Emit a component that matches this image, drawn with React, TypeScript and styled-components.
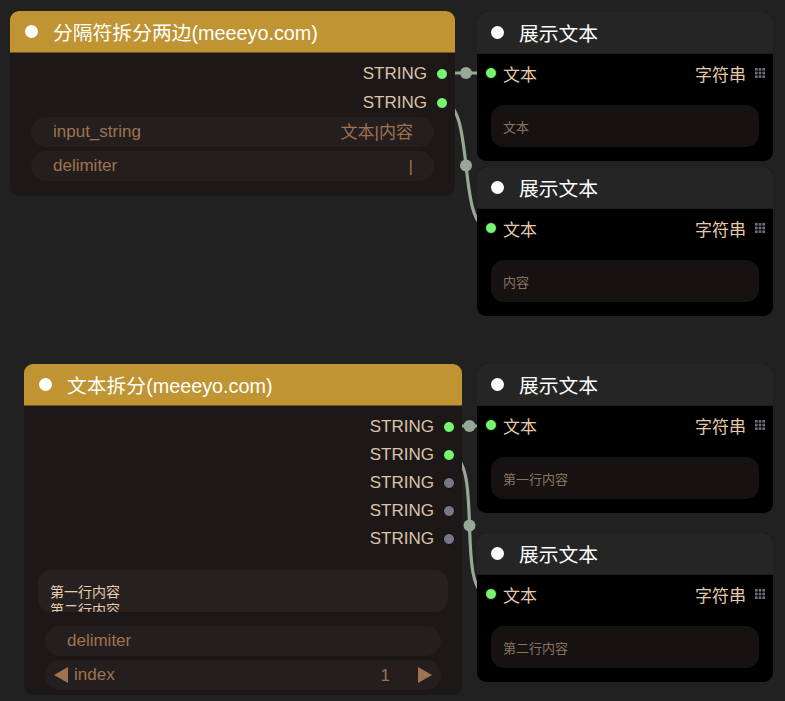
import React from "react";
import styled, { createGlobalStyle } from "styled-components";

const Global = createGlobalStyle`
  html, body { margin: 0; padding: 0; background: #212121; }
  body { font-family: "Liberation Sans", Arial, "Noto Sans CJK SC", sans-serif; }
`;

const Canvas = styled.div`
  position: relative;
  width: 785px;
  height: 701px;
  overflow: hidden;
  background: #212121;
`;

const LinkLayer = styled.svg`
  position: absolute;
  left: 0;
  top: 0;
  width: 785px;
  height: 701px;
`;

const Node = styled.div<{ $x: number; $y: number; $w: number; $bg: string }>`
  position: absolute;
  left: ${(p) => p.$x}px;
  top: ${(p) => p.$y}px;
  width: ${(p) => p.$w}px;
  background: ${(p) => p.$bg};
  border-radius: 9px;
  overflow: hidden;
  display: flex;
  flex-direction: column;
`;

const Header = styled.div<{ $bg: string; $pad: number; $line: string }>`
  height: 42px;
  flex: none;
  display: flex;
  align-items: center;
  gap: 15px;
  padding-left: ${(p) => p.$pad}px;
  background: ${(p) => p.$bg};
  border-bottom: 1px solid ${(p) => p.$line};
  box-sizing: border-box;
`;

const TitleDot = styled.span`
  width: 13px;
  height: 13px;
  border-radius: 50%;
  background: #ffffff;
  flex: none;
`;

const Title = styled.span`
  color: #ffffff;
  font-size: 19.8px;
  font-family: "Liberation Sans", Arial, "Noto Sans CJK SC", sans-serif;
  white-space: nowrap;
`;

const Body = styled.div<{ $pt: number; $pb: number }>`
  display: flex;
  flex-direction: column;
  padding-top: ${(p) => p.$pt}px;
  padding-bottom: ${(p) => p.$pb}px;
`;

const OutputRow = styled.div<{ $h: number }>`
  height: ${(p) => p.$h}px;
  display: flex;
  align-items: center;
  justify-content: flex-end;
  gap: 9px;
  padding-right: 7px;
`;

const SlotLabel = styled.span`
  color: #dcc3a9;
  font-size: 17px;
  white-space: nowrap;
`;

const SlotDot = styled.span<{ $on: boolean }>`
  width: 10px;
  height: 10px;
  border-radius: 50%;
  border: 1px solid #0c0c0c;
  background: ${(p) => (p.$on ? "#7af570" : "#777788")};
  flex: none;
`;

const Widget = styled.div<{ $mx: number; $mt: number }>`
  margin: ${(p) => p.$mt}px ${(p) => p.$mx}px 0;
  height: 30px;
  border-radius: 15px;
  background: #241f1e;
  display: flex;
  align-items: center;
  padding: 0 21px 0 22px;
  font-size: 17px;
  color: #a0724f;
  white-space: nowrap;
`;

const WidgetLabel = styled.span`
  flex: 1;
`;

const WidgetValue = styled.span`
  font-family: "Liberation Sans", Arial, "Noto Sans CJK SC", sans-serif;
  line-height: 1;
`;

const NumberWidget = styled(Widget)`
  padding: 0 9px 0 9px;
`;

const Arrow = styled.span<{ $dir: "l" | "r" }>`
  width: 0;
  height: 0;
  border-top: 8px solid transparent;
  border-bottom: 8px solid transparent;
  ${(p) =>
    p.$dir === "l"
      ? "border-right: 14px solid #a0724f; margin-right: 6px;"
      : "border-left: 14px solid #a0724f; margin-left: 28px;"}
  flex: none;
`;

const InputRow = styled.div`
  height: 28px;
  display: flex;
  align-items: center;
  padding: 0 8px;
  gap: 9px;
`;

const InputLabel = styled.span`
  flex: 1;
  margin-left: -3px;
  color: #e6c9ab;
  font-size: 17px;
  font-family: "Liberation Sans", Arial, "Noto Sans CJK SC", sans-serif;
`;

const TypeLabel = styled.span`
  color: #e6c9ab;
  font-size: 17px;
`;

const TextBox = styled.div<{ $bg: string; $mx: number; $mt: number; $pt: number; $lh: number; $fs: number; $color: string }>`
  margin: ${(p) => p.$mt}px ${(p) => p.$mx}px 0;
  height: 42px;
  box-sizing: border-box;
  border-radius: 13px;
  background: ${(p) => p.$bg};
  padding: ${(p) => p.$pt}px 12px 0;
  overflow: hidden;
  font-size: ${(p) => p.$fs}px;
  line-height: ${(p) => p.$lh}px;
  color: ${(p) => p.$color};
  font-family: "Noto Sans CJK SC", "Liberation Sans", sans-serif;
`;

const GridIcon = () => (
  <svg width="10" height="10" viewBox="0 0 10 10">
    {[0, 3.7, 7.4].map((y) =>
      [0, 3.7, 7.4].map((x) => (
        <rect key={`${x}-${y}`} x={x} y={y} width="2.6" height="2.6" fill="#6f6f82" />
      ))
    )}
  </svg>
);

type Link = { x1: number; y1: number; x2: number; y2: number };

const links: Link[] = [
  { x1: 442, y1: 73, x2: 490, y2: 73 },
  { x1: 442, y1: 102, x2: 490, y2: 229 },
  { x1: 449, y1: 426, x2: 490, y2: 426 },
  { x1: 449, y1: 455, x2: 490, y2: 596 },
];

const Links = () => (
  <LinkLayer viewBox="0 0 785 701">
    {links.map((l, i) => {
      const d = Math.hypot(l.x2 - l.x1, l.y2 - l.y1) * 0.25;
      const c1x = l.x1 + d;
      const c2x = l.x2 - d;
      const mx = 0.125 * l.x1 + 0.375 * c1x + 0.375 * c2x + 0.125 * l.x2;
      const my = 0.5 * l.y1 + 0.5 * l.y2;
      return (
        <g key={i}>
          <path
            d={`M ${l.x1} ${l.y1} C ${c1x} ${l.y1} ${c2x} ${l.y2} ${l.x2} ${l.y2}`}
            stroke="#98a896"
            strokeWidth="3.2"
            fill="none"
          />
          <circle cx={mx} cy={my} r="6" fill="#98a896" />
        </g>
      );
    })}
  </LinkLayer>
);

const ShowText = ({ x, y, text }: { x: number; y: number; text: string }) => (
  <Node $x={x} $y={y} $w={296} $bg="#000000">
    <Header $bg="#252525" $pad={14} $line="#1e1e1e">
      <TitleDot />
      <Title>展示文本</Title>
    </Header>
    <Body $pt={5} $pb={14}>
      <InputRow>
        <SlotDot $on />
        <InputLabel>文本</InputLabel>
        <TypeLabel>字符串</TypeLabel>
        <GridIcon />
      </InputRow>
      <TextBox $bg="#161211" $mx={14} $mt={18} $pt={13} $lh={18} $fs={13} $color="#8a7460">
        {text}
      </TextBox>
    </Body>
  </Node>
);

export default function App() {
  return (
    <>
      <Global />
      <Canvas>
        <Links />

        <Node $x={10} $y={11} $w={445} $bg="#1d1818">
          <Header $bg="#c09432" $pad={15} $line="#6e5420">
            <TitleDot />
            <Title>分隔符拆分两边(meeeyo.com)</Title>
          </Header>
          <Body $pt={6} $pb={15}>
            <OutputRow $h={29}>
              <SlotLabel>STRING</SlotLabel>
              <SlotDot $on />
            </OutputRow>
            <OutputRow $h={29}>
              <SlotLabel>STRING</SlotLabel>
              <SlotDot $on />
            </OutputRow>
            <Widget $mx={21} $mt={0}>
              <WidgetLabel>input_string</WidgetLabel>
              <WidgetValue>文本|内容</WidgetValue>
            </Widget>
            <Widget $mx={21} $mt={4}>
              <WidgetLabel>delimiter</WidgetLabel>
              <WidgetValue>|</WidgetValue>
            </Widget>
          </Body>
        </Node>

        <ShowText x={477} y={12} text="文本" />
        <ShowText x={477} y={167} text="内容" />

        <Node $x={24} $y={364} $w={438} $bg="#1d1818">
          <Header $bg="#c09432" $pad={15} $line="#6e5420">
            <TitleDot />
            <Title>文本拆分(meeeyo.com)</Title>
          </Header>
          <Body $pt={7} $pb={5}>
            {[true, true, false, false, false].map((on, i) => (
              <OutputRow key={i} $h={28}>
                <SlotLabel>STRING</SlotLabel>
                <SlotDot $on={on} />
              </OutputRow>
            ))}
            <TextBox $bg="#262120" $mx={14} $mt={17} $pt={12} $lh={18} $fs={14} $color="#e6cdb0">
              第一行内容
              <br />
              第二行内容
            </TextBox>
            <Widget $mx={21} $mt={14}>
              <WidgetLabel>delimiter</WidgetLabel>
            </Widget>
            <NumberWidget $mx={21} $mt={4}>
              <Arrow $dir="l" />
              <WidgetLabel>index</WidgetLabel>
              <WidgetValue>1</WidgetValue>
              <Arrow $dir="r" />
            </NumberWidget>
          </Body>
        </Node>

        <ShowText x={477} y={364} text="第一行内容" />
        <ShowText x={477} y={533} text="第二行内容" />
      </Canvas>
    </>
  );
}
